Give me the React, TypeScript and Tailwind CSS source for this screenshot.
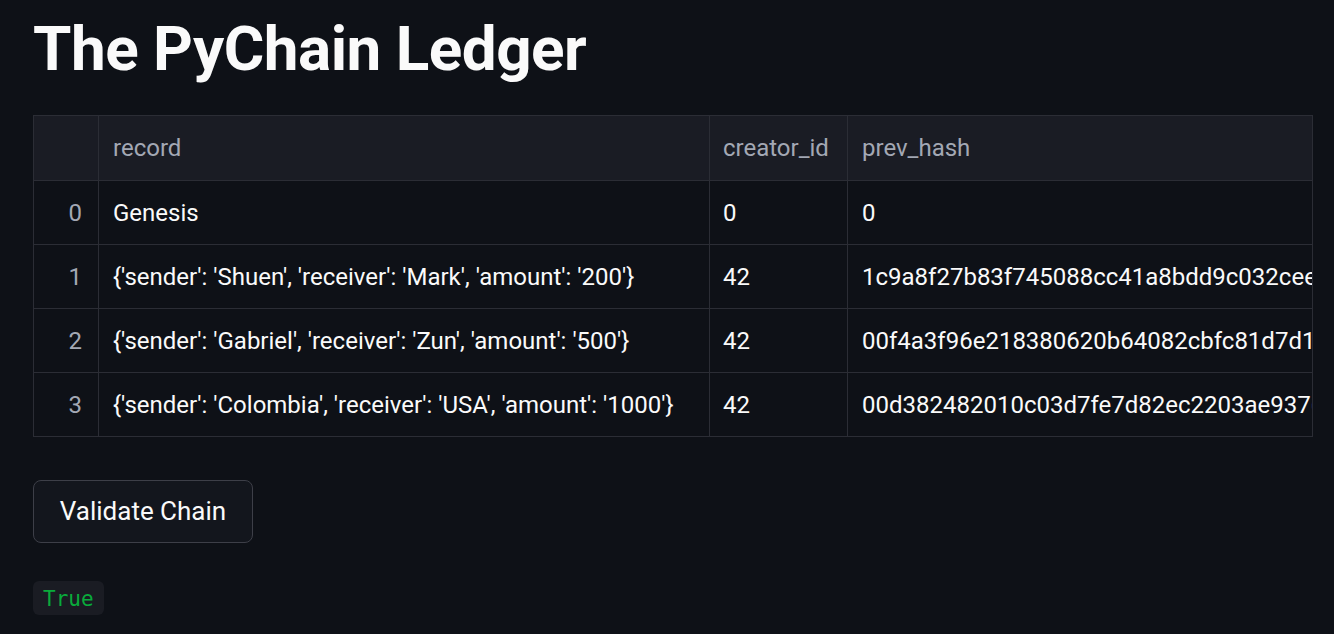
import React from "react";

const rows = [
  { i: 0, record: "Genesis", creator: "0", prev: "0" },
  { i: 1, record: "{'sender': 'Shuen', 'receiver': 'Mark', 'amount': '200'}", creator: "42", prev: "1c9a8f27b83f745088cc41a8bdd9c032cee41b7e2f0a9c8d" },
  { i: 2, record: "{'sender': 'Gabriel', 'receiver': 'Zun', 'amount': '500'}", creator: "42", prev: "00f4a3f96e218380620b64082cbfc81d7d13c5e9a2b4f71" },
  { i: 3, record: "{'sender': 'Colombia', 'receiver': 'USA', 'amount': '1000'}", creator: "42", prev: "00d382482010c03d7fe7d82ec2203ae93766b1f0c4e2a98" },
  { i: 4, record: "{'sender': 'Ana', 'receiver': 'Luis', 'amount': '50'}", creator: "42", prev: "007a1be3c9d0f2e4a6b8c1d3e5f7a9b0c2d4e6f8a1b3c5" },
];

export default function App() {
  return (
    <div
      className="min-h-[634px] w-full bg-[#0e1117] text-[#fafafa] pl-[33px] pr-[21px]"
      style={{ fontFamily: "Roboto, 'Noto Sans', sans-serif" }}
    >
      <h1 className="pt-[12px] text-[62px] font-bold leading-[74px] tracking-[-0.5px] text-[#fafafa]">
        The PyChain Ledger
      </h1>
      <div className="mt-[29px] h-[322px] w-[1280px] overflow-hidden border-r border-[#2b2d35]">
        <table className="border-collapse text-[24px] whitespace-nowrap">
          <thead>
            <tr className="h-[65px] bg-[#1a1c24]">
              <th className="w-[65px] min-w-[65px] border border-[#2b2d35]"></th>
              <th className="w-[611px] min-w-[611px] max-w-[611px] border border-[#2b2d35] px-[14px] text-left font-normal text-[#a3a8b4]">record</th>
              <th className="w-[138px] min-w-[138px] max-w-[138px] border border-[#2b2d35] px-[13px] text-left font-normal text-[#a3a8b4]">creator_id</th>
              <th className="min-w-[700px] border border-[#2b2d35] px-[14px] text-left font-normal text-[#a3a8b4]">prev_hash</th>
            </tr>
          </thead>
          <tbody>
            {rows.map((r) => (
              <tr key={r.i} className="h-[64px]">
                <td className="border border-[#2b2d35] pr-[16px] text-right text-[#a3a8b4]">{r.i}</td>
                <td className="border border-[#2b2d35] px-[14px] text-[#fafafa]">{r.record}</td>
                <td className="border border-[#2b2d35] px-[13px] text-[#fafafa]">{r.creator}</td>
                <td className="border border-[#2b2d35] px-[14px] text-[#fafafa]">{r.prev}</td>
              </tr>
            ))}
          </tbody>
        </table>
      </div>
      <button className="mt-[43px] flex h-[63px] w-[220px] items-center justify-center rounded-[8px] border border-[#3d3f48] bg-[#13161d] text-[26px] text-[#fafafa]">
        Validate Chain
      </button>
      <div className="mt-[38px] inline-flex h-[34px] items-center rounded-[6px] bg-[#1a1c23] px-[10px]">
        <span
          className="pt-[3px] text-[21px] text-[#09ab3b]"
          style={{ fontFamily: "'DejaVu Sans Mono', 'Liberation Mono', monospace" }}
        >
          True
        </span>
      </div>
    </div>
  );
}
